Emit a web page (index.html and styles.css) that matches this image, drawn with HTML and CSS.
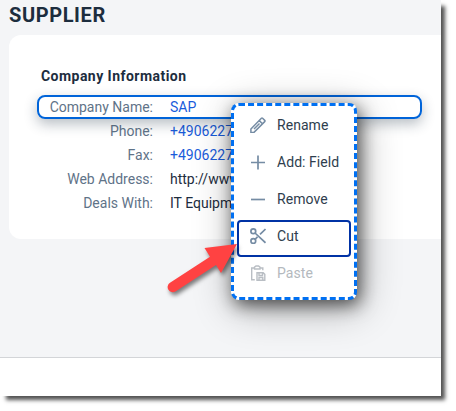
FILE: index.html
```html
<!DOCTYPE html>
<html lang="en">
<head>
<meta charset="utf-8">
<title>Supplier</title>
<link rel="stylesheet" href="styles.css">
</head>
<body>
<div class="window">
  <main class="page">
    <h1 class="title">SUPPLIER</h1>
    <section class="card">
      <h2 class="group-title">Company Information</h2>
      <div class="fields">
        <div class="field selected"><span class="label">Company Name:</span><span class="value link">SAP</span></div>
        <div class="field"><span class="label">Phone:</span><span class="value link">+49062277</span></div>
        <div class="field"><span class="label">Fax:</span><span class="value link">+49062277</span></div>
        <div class="field"><span class="label">Web Address:</span><span class="value">http://www.</span></div>
        <div class="field"><span class="label">Deals With:</span><span class="value">IT Equipment</span></div>
      </div>
    </section>
  </main>
  <footer class="footer"></footer>
</div>
<div class="menu">
  <div class="item"><svg class="icon pencil" viewBox="0 0 16 16"><path d="M.9 15.4V12L11.4 1.3q.6-.6 1.2 0l2.1 2.1q.6.6 0 1.2L4 15.4zM9.3 3.6l3.1 3.1M4 12 9.5 6.5"/></svg><span>Rename</span></div>
  <div class="item"><svg class="icon" viewBox="0 0 16 16"><path d="M1 8.5h14M8 1.5v14"/></svg><span>Add: Field</span></div>
  <div class="item"><svg class="icon" viewBox="0 0 16 16"><path d="M1 8.5h14"/></svg><span>Remove</span></div>
  <div class="item active"><svg class="icon" viewBox="0 0 16 16"><circle cx="3.3" cy="3.3" r="2.4"/><circle cx="3.3" cy="13" r="2.4"/><path d="M5 5 15.5 14.8M5 11.3 7.5 8.9M10 6.3 15.5 1"/></svg><span>Cut</span></div>
  <div class="item disabled"><svg class="icon" viewBox="0 0 16 16"><path d="M4.8 14.8H1.7V3h2.8M10 3h2.8v2.2M4.5 4V2.2L6 1h2.5L10 2.2V4zM7 7.8h6.2l1.6 1.6v5.9H7zM9 8v2.5h3.5V8M9 15v-2.5h3.8V15"/></svg><span>Paste</span></div>
</div>
<svg class="arrow" viewBox="0 0 80 66"><path d="M72 8 39.5 12 45 20.7 5 46.8A5 5 0 0 0 10.4 55.4L51 29 56 37Z"/></svg>
</body>
</html>
```
FILE: styles.css
```css
* { box-sizing: border-box; }
body {
  margin: 0;
  width: 456px;
  height: 411px;
  overflow: hidden;
  background: #fff;
  font: 14px/24px Roboto, "Liberation Sans", sans-serif;
  color: #1d2d3e;
}
.window {
  display: flex;
  flex-direction: column;
  width: 441px;
  height: 396px;
  background: #fff;
  box-shadow: 5px 5px 4px -1px rgba(0, 0, 0, .68);
}
.page {
  height: 358px;
  padding-left: 9px;
  overflow: hidden;
  background: #f4f5f7;
  border-bottom: 1px solid #d3d5d8;
}
.title {
  margin: 0;
  height: 35px;
  padding-top: 3px;
  font-size: 20px;
  font-weight: 700;
  line-height: 24px;
  letter-spacing: .6px;
}
.card {
  height: 204px;
  padding: 29px 19px 0 28px;
  background: #fff;
  border-radius: 12px 0 0 12px;
}
.group-title {
  margin: 0 0 7px 4px;
  font-size: 14px;
  font-weight: 700;
  line-height: 24px;
  letter-spacing: .46px;
}
.field {
  display: grid;
  grid-template-columns: 116px 1fr;
  column-gap: 17px;
  height: 24px;
  white-space: nowrap;
}
.label {
  text-align: right;
  color: #5f7388;
}
.link { color: #1a5cdb; }
.selected {
  position: relative;
  border: 2px solid #0064d9;
  border-radius: 8px;
  grid-template-columns: 114px 1fr;
  line-height: 20px;
  box-shadow: 0 5px 13px rgba(34, 53, 72, .32);
}
.menu {
  position: absolute;
  left: 231px;
  top: 103px;
  width: 126px;
  height: 197px;
  padding: 3px 3px;
  background: #fff;
  border: 3px dashed #0070f2;
  border-radius: 8px;
  box-shadow: 3px 5px 17px rgba(0, 0, 0, .62), 3px 8px 40px rgba(0, 0, 0, .32);
}
.item {
  display: flex;
  align-items: center;
  gap: 11px;
  height: 37px;
  padding: 0 0 5px 13px;
  white-space: nowrap;
  color: #2f3e4e;
  letter-spacing: .05px;
}
.active {
  padding: 0 0 5px 11px;
  border: 2px solid #0032a5;
  border-radius: 4px;
}
.icon {
  width: 16px;
  height: 16px;
  flex: none;
  fill: none;
  stroke: #758ca4;
  stroke-width: 1.7;
}
.pencil { stroke-width: 1.5; }
.disabled { color: #b4b9be; }
.disabled .icon { stroke: #b9bec4; stroke-width: 1.4; }
.arrow {
  position: absolute;
  left: 165px;
  top: 236px;
  width: 80px;
  height: 66px;
  fill: #ff4242;
  filter: drop-shadow(2px 3px 2px rgba(0, 0, 0, .5));
}
```
